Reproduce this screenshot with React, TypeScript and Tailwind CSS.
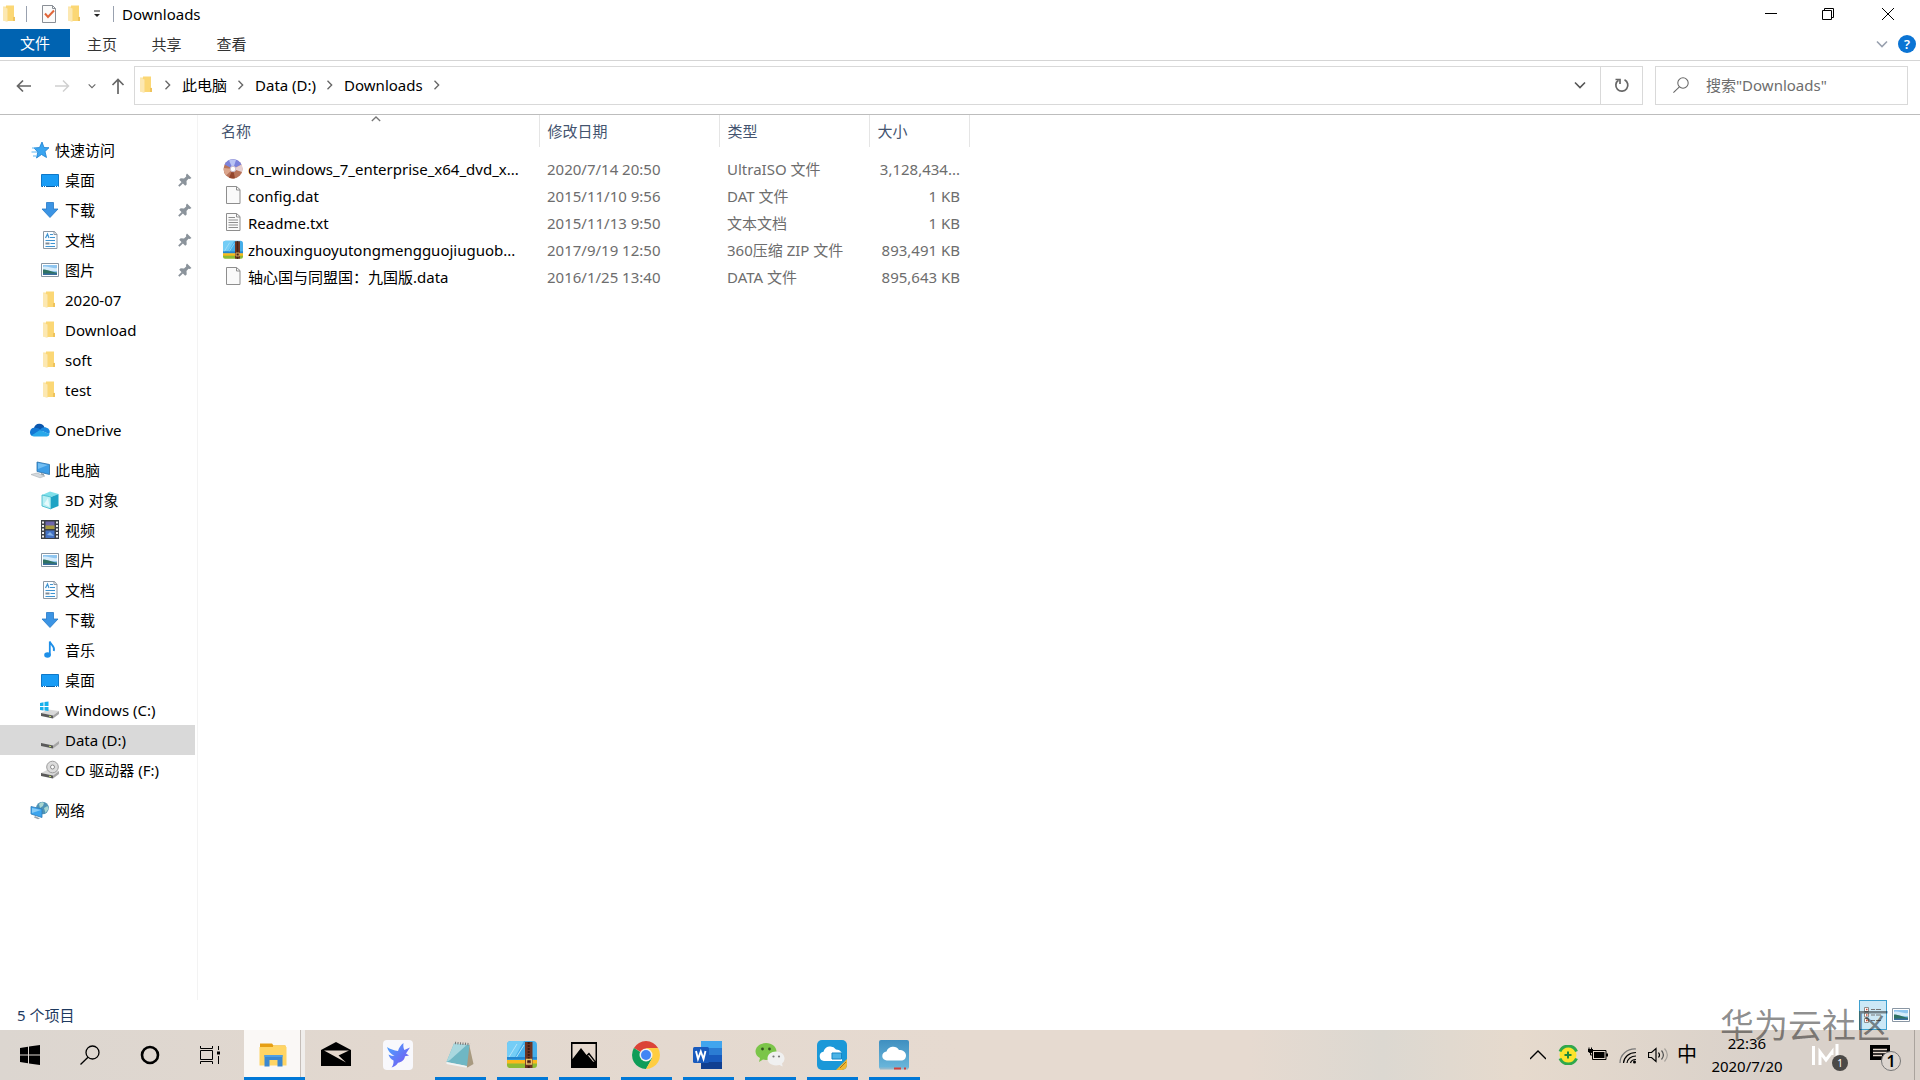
import type { ReactNode } from 'react';

type IconProps = { className?: string };

function FolderIcon({ className = 'h-5 w-5' }: IconProps) {
  return (
    <svg className={className} viewBox="1 0 20 20" aria-hidden="true">
      <path d="M4 2.500h4v14H4z" fill="#fbe3a0" />
      <path d="M7 1.500h8v11l1 1V17H7z" fill="#fbd775" />
      <path d="M4 3l4.500 1.500V18L4 16.500z" fill="#fce8b2" />
      <path d="M14 13h2v4h-2z" fill="#efc35c" />
    </svg>
  );
}

function CheckDocIcon() {
  return (
    <svg className="h-5 w-5" viewBox="0 0 20 20" aria-hidden="true">
      <path d="M3.500 1.500h10l3 3v14h-13z" fill="#fbfbfb" stroke="#8a8f96" />
      <path d="M13.500 1.500v3h3" fill="none" stroke="#8a8f96" />
      <path d="M6 9.500l3 3.500 6-6.500" fill="none" stroke="#e0663a" strokeWidth="2" />
    </svg>
  );
}

function StarIcon() {
  return (
    <svg className="h-5 w-5" viewBox="0 0 20 20" aria-hidden="true">
      <path d="M12 2l2 5.500 5 .2-4 3.800 1.500 6-5-3-5 3.500 1.300-6L4 8l5.500-.5z" fill="#3aa5f0" stroke="#1b7fd0" strokeWidth=".8" />
      <path d="M2 8h4M1.500 12H7M3 16h3" stroke="#5cb6f2" strokeWidth="1" />
    </svg>
  );
}

function DesktopIcon() {
  return (
    <svg className="h-5 w-5" viewBox="0 0 20 20" aria-hidden="true">
      <path d="M1.500 4.500h17v12h-17z" fill="#199cf5" stroke="#0f78c8" />
      <path d="M2 16.500h16" stroke="#0b5fa5" />
      <path d="M3 16.500h1m1 0h1m9 0h1m1 0h1" stroke="#fff" />
    </svg>
  );
}

function DownloadIcon() {
  return (
    <svg className="h-5 w-5" viewBox="0 0 20 20" aria-hidden="true">
      <path d="M6.500 2.500h7V9h4.500l-8 8.500L2 9h4.500z" fill="#3b94e4" stroke="#2478c6" strokeWidth=".8" />
    </svg>
  );
}

function DocumentIcon() {
  return (
    <svg className="h-5 w-5" viewBox="0 0 20 20" aria-hidden="true">
      <path d="M3.500 1.500h11l2.500 3v14H3.500z" fill="#fbfdff" stroke="#8c98a4" />
      <path d="M14 1.500v3h3" fill="none" stroke="#8c98a4" />
      <path d="M5.500 8L7.500 4l1.500 4M10 4.500h3M10 7.500h5M5.500 10.500h9.500M10.500 13.500H15M5.500 16.500H15" fill="none" stroke="#3f94d1" strokeWidth="1.200" />
      <path d="M5.500 12.500h4v2h-4z" fill="#7d8a96" />
    </svg>
  );
}

function PictureIcon({ className = 'h-5 w-5' }: IconProps) {
  return (
    <svg className={className} viewBox="0 0 20 20" aria-hidden="true">
      <path d="M1.500 3.500h17v13h-17z" fill="#fff" stroke="#8996a3" />
      <path d="M3 5h14v10H3z" fill="#8fc6f0" />
      <path d="M3 7c4-1.500 8 2 14 1v3H3z" fill="#d6ecfb" />
      <path d="M3 9.500c5 0 8 2.500 14 3V15H3z" fill="#2f7263" />
      <path d="M3 13.500h14V15H3z" fill="#386da0" />
    </svg>
  );
}

function CloudIcon() {
  return (
    <svg className="h-5 w-5" viewBox="0 0 20 20" aria-hidden="true">
      <path d="M4 8a5.500 5.500 0 0 1 10.500-.5L10 13z" fill="#0a56ad" />
      <path d="M4 7.800A4.500 4.500 0 0 0 2 16l9-6C9 8 6 7.300 4 7.800z" fill="#1378d4" />
      <path d="M10 10c1-2 4-3.500 6.500-2.200A4 4 0 0 1 19 14z" fill="#1a8ae0" />
      <path d="M1.500 15.500L10 10l9.500 4a2.800 2.800 0 0 1-2.500 2.500H4a4 4 0 0 1-2.500-1z" fill="#28a8ea" />
    </svg>
  );
}

function ComputerIcon() {
  return (
    <svg className="h-5 w-5" viewBox="0 0 20 20" aria-hidden="true">
      <path d="M7 2l12.500 2.500v10L7 11.500z" fill="#3d9de6" stroke="#2a6ea6" strokeWidth=".8" />
      <path d="M8 3l10 2L8 9z" fill="#72bef3" />
      <path d="M11 13l3 1v2l-3-1z" fill="#8f9aa3" />
      <path d="M1 14.500l6-1.500 8 3-5 1.800z" fill="#d4d9dd" stroke="#a9b0b6" strokeWidth=".6" />
    </svg>
  );
}

function CubeIcon() {
  return (
    <svg className="h-5 w-5" viewBox="0 0 20 20" aria-hidden="true">
      <path d="M2 5l8-3.500L18.500 4 11 7z" fill="#7fe0ea" />
      <path d="M2 5l9 2v12l-9-3z" fill="#b7eef3" stroke="#35b5c8" strokeWidth=".8" />
      <path d="M11 7l7.500-3v12L11 19z" fill="#1fa3c4" />
      <path d="M4 14l4-6 1.500 9z" fill="#e6fafc" />
    </svg>
  );
}

function VideoIcon() {
  return (
    <svg className="h-5 w-5" viewBox="0 0 20 20" aria-hidden="true">
      <path d="M1 0h18v19H1z" fill="#3b3f45" />
      <path d="M5.500 1.500h9V9h-9z" fill="#6f66ad" />
      <path d="M5.500 5.500h9V9h-9z" fill="#a79b3e" />
      <path d="M5.500 10.500h9V18h-9z" fill="#4472c4" />
      <path d="M7 15l3-3 4 4z" fill="#86b3e6" />
      <path d="M3 1.500v17M17 1.500v17" stroke="#f2f2f2" strokeWidth="2" strokeDasharray="2 1.500" />
    </svg>
  );
}

function MusicIcon() {
  return (
    <svg className="h-5 w-5" viewBox="0 0 20 20" aria-hidden="true">
      <ellipse cx="7.500" cy="15" rx="3.300" ry="2.700" fill="#1e8fe8" />
      <path d="M9.800 15.500V1.500c.8 3.500 5.700 4.500 4 9.500" fill="none" stroke="#1e8fe8" strokeWidth="1.800" />
    </svg>
  );
}

function DriveBody() {
  return (
    <>
      <path d="M1 13l7-3.500L19 11l-6 4.500z" fill="#d9d9d9" />
      <path d="M1 13l12 2.500v3L1 16z" fill="#5a5a5a" />
      <path d="M13 15.500L19 11v3l-6 4.500z" fill="#a6a6a6" />
      <path d="M9 16.200l2 .4" stroke="#c8e66a" />
    </>
  );
}

function WindowsDriveIcon() {
  return (
    <svg className="h-5 w-5" viewBox="0 0 20 20" aria-hidden="true">
      <DriveBody />
      <path d="M0 3l3.500-.7V6H0zM4.500 2l4-.6V6h-4zM0 7h3.500v3.500L0 10zM4.500 7h4v4l-4-.5z" fill="#16b1ec" />
    </svg>
  );
}

function DriveIcon() {
  return (
    <svg className="h-5 w-5" viewBox="0 0 20 20" aria-hidden="true">
      <DriveBody />
    </svg>
  );
}

function CdDriveIcon() {
  return (
    <svg className="h-5 w-5" viewBox="0 0 20 20" aria-hidden="true">
      <DriveBody />
      <circle cx="12.500" cy="7" r="5.800" fill="#dcdcdc" stroke="#9c9c9c" />
      <circle cx="12.500" cy="7" r="2" fill="#fff" stroke="#8a8a8a" />
    </svg>
  );
}

function NetworkIcon() {
  return (
    <svg className="h-5 w-5" viewBox="0 0 20 20" aria-hidden="true">
      <circle cx="12.500" cy="8" r="6.300" fill="#4f93b5" />
      <path d="M9 4c2-2 4-2 5-1l-1 3-3 2zM14 8l3.500-2 1 3-3 4z" fill="#a8d6d0" />
      <path d="M1 6.500l11 2.500v8.500L1 14z" fill="#3ba4ee" stroke="#2d78b4" strokeWidth=".8" />
      <path d="M2 8l9 2-9 3z" fill="#86cbf7" />
      <path d="M5 16l5 2.500-2 .8-4-1.800z" fill="#9aa4ac" />
    </svg>
  );
}

function PinIcon() {
  return (
    <svg className="h-3.5 w-3.5" viewBox="0 0 14 14" aria-hidden="true">
      <path d="M9 .5L13.500 5l-1.700 1-1.300-.2-2 2.200.2 3.500-1.500 1.300L1.200 6.800l1.500-1.500 3.300.2 2.200-2L8 2z" fill="#8b939b" />
      <path d="M4.500 9.500L.8 13.200" stroke="#8b939b" strokeWidth="1.800" />
    </svg>
  );
}

function DiscIcon() {
  return (
    <svg className="h-5 w-5" viewBox="0 0 20 20" aria-hidden="true">
      <circle cx="10" cy="10" r="9.500" fill="#b9745a" />
      <path d="M10 10L1.500 5.500A9.500 9.500 0 0 1 18.500 5.500z" fill="#7c83dc" />
      <path d="M10 10L6 1.400A9.500 9.500 0 0 1 13 1z" fill="#b9c3f5" />
      <path d="M10 10l8.500-4.500A9.500 9.500 0 0 1 19 13z" fill="#e6cfd0" />
      <path d="M10 10l-9-1a9.500 9.500 0 0 0 2 7.500z" fill="#dba58c" />
      <path d="M10 10l-4 8.600a9.500 9.500 0 0 0 6 .6z" fill="#94452c" />
      <circle cx="10" cy="10" r="2.800" fill="#fff" stroke="#c7b8c9" />
    </svg>
  );
}

function BlankFileIcon() {
  return (
    <svg className="h-5 w-5" viewBox="0 0 20 20" aria-hidden="true">
      <path d="M3.500.5h10l3.500 3v14H3.500z" fill="#fafafa" stroke="#8e8e8e" />
      <path d="M13.500.5v3.500H17" fill="none" stroke="#8e8e8e" />
    </svg>
  );
}

function TextFileIcon() {
  return (
    <svg className="h-5 w-5" viewBox="0 0 20 20" aria-hidden="true">
      <path d="M3.500.5h10l3.500 3v14H3.500z" fill="#fafafa" stroke="#8e8e8e" />
      <path d="M13.500.5v3.500H17M5.500 4.500h6.500M5.500 7h9.500M5.500 9.500h9.500M5.500 12h9.500M5.500 14.500h9.500" fill="none" stroke="#8e8e8e" />
    </svg>
  );
}

function ZipIcon({ className = 'h-5 w-5' }: IconProps) {
  return (
    <svg className={className} viewBox="0 0 30 30" aria-hidden="true">
      <path d="M0 20h30v5a3 3 0 0 1-3 3H3a3 3 0 0 1-3-3z" fill="#8dbb35" />
      <path d="M0 19h30v4.500H0z" fill="#fbb91c" />
      <path d="M4 1h22a4 4 0 0 1 4 4v15H0V5a4 4 0 0 1 4-4z" fill="#45aeea" />
      <path d="M4 1h13L8 17H0V5a4 4 0 0 1 4-4z" fill="#74cdf6" />
      <path d="M0 17h30v2.500H0z" fill="#2386cf" />
      <path d="M10 4L2 17M17 5L9.500 17" stroke="#b3e4fb" />
      <path d="M18 2h7.500v26H18z" fill="#6b3423" />
      <path d="M21.700 2v26" stroke="#3c1b12" strokeWidth="2" strokeDasharray="2 1" />
      <path d="M19.500 19.500h5v4.500h-5z" fill="none" stroke="#e8c36a" strokeWidth="1.300" />
    </svg>
  );
}

function SearchGlyph({ className }: IconProps) {
  return (
    <svg className={className} viewBox="0 0 20 20" fill="none" stroke="currentColor" strokeWidth="1.300" aria-hidden="true">
      <circle cx="12.500" cy="7.500" r="6.500" />
      <path d="M8 12.200L.5 19.500" />
    </svg>
  );
}

function Chevron({ className, d = 'M3 1l5 5-5 5' }: IconProps & { d?: string }) {
  return (
    <svg className={className} viewBox="0 0 12 12" fill="none" stroke="currentColor" strokeWidth="1.600" aria-hidden="true">
      <path d={d} />
    </svg>
  );
}

const DOWN = 'M1 3.500l5 5 5-5';
const UP = 'M1 8.500l5-5 5 5';

type TreeItem = {
  label: string;
  icon: ReactNode;
  root?: boolean;
  pinned?: boolean;
  selected?: boolean;
};

const tree: TreeItem[][] = [
  [
    { label: '快速访问', icon: <StarIcon />, root: true },
    { label: '桌面', icon: <DesktopIcon />, pinned: true },
    { label: '下载', icon: <DownloadIcon />, pinned: true },
    { label: '文档', icon: <DocumentIcon />, pinned: true },
    { label: '图片', icon: <PictureIcon />, pinned: true },
    { label: '2020-07', icon: <FolderIcon /> },
    { label: 'Download', icon: <FolderIcon /> },
    { label: 'soft', icon: <FolderIcon /> },
    { label: 'test', icon: <FolderIcon /> },
  ],
  [{ label: 'OneDrive', icon: <CloudIcon />, root: true }],
  [
    { label: '此电脑', icon: <ComputerIcon />, root: true },
    { label: '3D 对象', icon: <CubeIcon /> },
    { label: '视频', icon: <VideoIcon /> },
    { label: '图片', icon: <PictureIcon /> },
    { label: '文档', icon: <DocumentIcon /> },
    { label: '下载', icon: <DownloadIcon /> },
    { label: '音乐', icon: <MusicIcon /> },
    { label: '桌面', icon: <DesktopIcon /> },
    { label: 'Windows (C:)', icon: <WindowsDriveIcon /> },
    { label: 'Data (D:)', icon: <DriveIcon />, selected: true },
    { label: 'CD 驱动器 (F:)', icon: <CdDriveIcon /> },
  ],
  [{ label: '网络', icon: <NetworkIcon />, root: true }],
];

const files = [
  { name: 'cn_windows_7_enterprise_x64_dvd_x...', date: '2020/7/14 20:50', type: 'UltraISO 文件', size: '3,128,434...', icon: <DiscIcon /> },
  { name: 'config.dat', date: '2015/11/10 9:56', type: 'DAT 文件', size: '1 KB', icon: <BlankFileIcon /> },
  { name: 'Readme.txt', date: '2015/11/13 9:50', type: '文本文档', size: '1 KB', icon: <TextFileIcon /> },
  { name: 'zhouxinguoyutongmengguojiuguob...', date: '2017/9/19 12:50', type: '360压缩 ZIP 文件', size: '893,491 KB', icon: <ZipIcon /> },
  { name: '轴心国与同盟国：九国版.data', date: '2016/1/25 13:40', type: 'DATA 文件', size: '895,643 KB', icon: <BlankFileIcon /> },
];

function TitleBar() {
  return (
    <header className="flex h-[29px] items-center pb-0.5">
      <div className="flex items-center">
        <FolderIcon className="h-5 w-5" />
        <span className="ml-1.5 h-4 w-px bg-gray-400" />
        <button aria-label="属性" className="ml-3">
          <CheckDocIcon />
        </button>
        <button aria-label="新建文件夹" className="ml-1.5">
          <FolderIcon className="h-5 w-5" />
        </button>
        <button aria-label="自定义快速访问工具栏" className="ml-2">
          <svg className="h-2 w-2" viewBox="0 0 8 8" aria-hidden="true">
            <path d="M1 1h6" stroke="#222" />
            <path d="M1 4h6L4 7z" fill="#222" />
          </svg>
        </button>
        <span className="ml-3 h-4 w-px bg-gray-400" />
      </div>
      <h1 className="ml-2">Downloads</h1>
      <div className="ml-auto flex">
        <button aria-label="最小化" className="flex w-[58px] justify-center">
          <svg className="h-3 w-3" viewBox="0 0 12 12" stroke="#000" aria-hidden="true">
            <path d="M0 5.500h12" />
          </svg>
        </button>
        <button aria-label="还原" className="flex w-14 justify-center">
          <svg className="h-3 w-3" viewBox="0 0 12 12" fill="none" stroke="#000" aria-hidden="true">
            <path d="M.5 2.500h9v9h-9zM2.500 2.500v-2h9v9h-2" />
          </svg>
        </button>
        <button aria-label="关闭" className="flex w-16 justify-center">
          <svg className="h-3 w-3" viewBox="0 0 12 12" stroke="#000" aria-hidden="true">
            <path d="M0 0l12 12M12 0L0 12" />
          </svg>
        </button>
      </div>
    </header>
  );
}

function RibbonTabs() {
  return (
    <div className="flex h-8 items-start border-b border-[#d5d5d5]">
      <button className="h-7 w-[70px] bg-[#0063b1] text-white">文件</button>
      <button className="h-[30px] w-16 text-[#333]">主页</button>
      <button className="h-[30px] w-[65px] text-[#333]">共享</button>
      <button className="h-[30px] w-[65px] text-[#333]">查看</button>
      <div className="ml-auto flex h-[30px] items-center gap-2.5 pr-1">
        <button aria-label="展开功能区">
          <Chevron className="h-3 w-3 text-gray-400" d={DOWN} />
        </button>
        <button aria-label="帮助" className="h-[18px] w-[18px] rounded-full bg-[#0b74d4] text-[13px] leading-[18px] font-semibold text-white">
          ?
        </button>
      </div>
    </div>
  );
}

function AddressRow() {
  return (
    <div className="flex h-[54px] items-center border-b border-[#bdbdbd] pr-3 pb-1">
      <div className="flex w-[134px] shrink-0 items-center pl-4 text-[#666]">
        <button aria-label="后退">
          <svg className="h-4 w-4" viewBox="0 0 16 16" fill="none" stroke="currentColor" strokeWidth="1.700" aria-hidden="true">
            <path d="M15 8H1.500M7 2.500L1.500 8 7 13.500" />
          </svg>
        </button>
        <button aria-label="前进" className="ml-[22px] text-[#d0d0d0]">
          <svg className="h-4 w-4" viewBox="0 0 16 16" fill="none" stroke="currentColor" strokeWidth="1.500" aria-hidden="true">
            <path d="M1 8h13.500M9 2.500L14.500 8 9 13.500" />
          </svg>
        </button>
        <button aria-label="最近浏览的位置" className="ml-[18px]">
          <Chevron className="h-2 w-2" d={DOWN} />
        </button>
        <button aria-label="上移" className="ml-3.5">
          <svg className="h-4 w-4" viewBox="0 0 16 16" fill="none" stroke="currentColor" strokeWidth="1.700" aria-hidden="true">
            <path d="M8 16V1.500M2.500 7L8 1.500 13.500 7" />
          </svg>
        </button>
      </div>
      <div className="flex h-[39px] flex-1 items-center border border-[#d9d9d9] pb-0.5">
        <FolderIcon className="ml-0.5 h-5 w-5" />
        <Chevron className="ml-1.5 h-2.5 w-2.5 text-[#666]" />
        <button className="ml-[9px]">此电脑</button>
        <Chevron className="ml-[9px] h-2.5 w-2.5 text-[#666]" />
        <button className="ml-[9px]">Data (D:)</button>
        <Chevron className="ml-[9px] h-2.5 w-2.5 text-[#666]" />
        <button className="ml-[9px]">Downloads</button>
        <Chevron className="ml-[9px] h-2.5 w-2.5 text-[#666]" />
        <button aria-label="以前的位置" className="ml-auto flex w-10 items-center justify-center self-stretch text-[#555]">
          <Chevron className="h-3 w-3" d={DOWN} />
        </button>
        <span className="-mb-0.5 w-px self-stretch bg-[#d9d9d9]" />
        <button aria-label="刷新" className="flex w-[41px] items-center justify-center self-stretch text-[#666]">
          <svg className="h-4 w-4" viewBox="0 0 16 16" fill="none" stroke="currentColor" strokeWidth="1.700" aria-hidden="true">
            <path d="M10.500 2.800a6 6 0 1 1-6 .4" />
            <path d="M1.500 2.500H6V7" />
          </svg>
        </button>
      </div>
      <label className="ml-3 flex h-[39px] w-[253px] items-center border border-[#d9d9d9] pb-0.5 pl-[17px] text-[#666]">
        <SearchGlyph className="h-4 w-4 shrink-0" />
        <input
          type="search"
          aria-label="搜索"
          placeholder={'搜索"Downloads"'}
          className="ml-[17px] min-w-0 flex-1 bg-transparent outline-none placeholder:text-[#6d6d6d]"
        />
      </label>
    </div>
  );
}

function Sidebar() {
  return (
    <nav aria-label="导航窗格" className="flex w-[198px] shrink-0 flex-col gap-2.5 border-r border-[#f3f3f3] pt-5">
      {tree.map((group, i) => (
        <ul key={i}>
          {group.map((item) => (
            <li key={item.label}>
              <button
                className={`flex h-[30px] w-[195px] items-center gap-[5px] pr-[3px] ${item.root ? 'pl-[30px]' : 'pl-10'} ${item.selected ? 'bg-[#d9d9d9]' : ''}`}
              >
                {item.icon}
                <span>{item.label}</span>
                {item.pinned && (
                  <span className="ml-auto">
                    <PinIcon />
                  </span>
                )}
              </button>
            </li>
          ))}
        </ul>
      ))}
    </nav>
  );
}

function FileTable() {
  return (
    <main className="min-w-0 flex-1">
      <table className="w-[771px] table-fixed border-collapse text-left">
        <colgroup>
          <col className="w-[341px]" />
          <col className="w-[180px]" />
          <col className="w-[150px]" />
          <col className="w-[100px]" />
        </colgroup>
        <thead className="text-[#44546f]">
          <tr className="h-8">
            <th className="relative border-r border-[#e5e5e5] pl-[23px] font-normal">
              名称
              <Chevron className="absolute -top-px left-[173px] h-2.5 w-2.5 text-[#777]" d={UP} />
            </th>
            <th className="border-r border-[#e5e5e5] pl-2 font-normal">修改日期</th>
            <th className="border-r border-[#e5e5e5] pl-2 font-normal">类型</th>
            <th className="border-r border-[#e5e5e5] pl-2 font-normal">大小</th>
          </tr>
        </thead>
        <tbody className="text-[#6d6d6d] before:block before:h-2 before:content-['']">
          {files.map((file) => (
            <tr key={file.name} className="h-[27px]">
              <td className="pl-[25px] whitespace-nowrap text-black">
                <span className="flex items-center gap-[5px]">
                  {file.icon}
                  {file.name}
                </span>
              </td>
              <td className="pl-2 whitespace-nowrap">{file.date}</td>
              <td className="pl-2 whitespace-nowrap">{file.type}</td>
              <td className="pr-[9px] text-right whitespace-nowrap">{file.size}</td>
            </tr>
          ))}
        </tbody>
      </table>
    </main>
  );
}

function StatusBar() {
  return (
    <footer className="flex h-[30px] items-center pr-[9px] pl-[17px] text-[#1e3a5f]">
      <span>5 个项目</span>
      <div className="ml-auto flex items-center gap-1">
        <button aria-label="详细信息" className="flex h-[30px] w-7 items-center justify-center border border-[#3fa0cf] bg-[#cce8f6]">
          <svg className="h-4 w-5" viewBox="0 0 20 16" aria-hidden="true">
            <path d="M1.500.5h4v4h-4zM1.500 6h4v4h-4zM1.500 11.500h4v4h-4z" fill="#fff" stroke="#8c8c8c" />
            <path d="M3 2.500h1.500M3 8h1.500M3 13.500h1.500" stroke="#d0452c" strokeWidth="1.500" />
            <path d="M8 2.500h4m1 0h5M8 8h4m1 0h5M8 13.500h4m1 0h5" stroke="#777" />
          </svg>
        </button>
        <button aria-label="大缩略图">
          <PictureIcon className="h-5 w-5" />
        </button>
      </div>
    </footer>
  );
}

const apps: { label: string; running?: boolean; icon: ReactNode }[] = [
  {
    label: '邮件',
    icon: (
      <svg className="h-[30px] w-[30px]" viewBox="0 0 30 30" aria-hidden="true">
        <path d="M0 10L15 2l15 8v16H0z" fill="#000" />
        <path d="M3 10.500h25L17.500 15.500l7.500 7L3 10.500z" fill="#e5d8cd" />
      </svg>
    ),
  },
  {
    label: '迅雷',
    icon: (
      <svg className="h-[30px] w-[30px]" viewBox="0 0 30 30" aria-hidden="true">
        <defs>
          <linearGradient id="bird" x1="0" y1="0" x2="1" y2="1">
            <stop offset="0" stopColor="#4aa8ff" />
            <stop offset="1" stopColor="#7a4ff0" />
          </linearGradient>
        </defs>
        <rect width="30" height="30" rx="4" fill="#f8f8fc" />
        <path d="M4 7c3 2 7 3.500 11 4 1-3.500 3-6 5.500-8-.5 3 0 5 .8 7L27 7.500l-4 6 3 2-4 .7c-.7 4-3.500 6-7 6.500-1.500 2.500-3.500 4-6.500 4.800 2-2.500 2.200-5 2-7C7.500 19 6 16.500 5.500 14.500c2 1 4 1.500 6 1.500C7.500 14 5 11 4 7z" fill="url(#bird)" />
      </svg>
    ),
  },
  {
    label: '记事本',
    running: true,
    icon: (
      <svg className="h-[30px] w-[30px]" viewBox="0 0 30 30" aria-hidden="true">
        <path d="M24 4l4.500 20-6 3.500-3-1z" fill="#a89a80" />
        <path d="M9 3.500l15.500 1.500L22 26 1.500 22z" fill="#6fb7c4" />
        <path d="M9 3.500l13 1.200L5 20l-3.500 2z" fill="#a9d8df" />
        <path d="M1.500 22L22 26l-.3 1.800L1.500 24z" fill="#f0f4f4" />
        <path d="M10 3l15 1.300" stroke="#777" strokeWidth="2.500" strokeDasharray="1 1.500" />
      </svg>
    ),
  },
  { label: '360压缩', running: true, icon: <ZipIcon className="h-[30px] w-[30px]" /> },
  {
    label: '照片',
    running: true,
    icon: (
      <svg className="h-[26px] w-[26px]" viewBox="0 0 26 26" aria-hidden="true">
        <path d="M0 0h26v26H0z" fill="#000" />
        <path d="M1.500 2h23v17L18 10.500l-2.500 2.500-5.500-7-8.500 11z" fill="#e5d8cd" />
        <path d="M16.500 13l2 .5 5 6.500-1.500-.5z" fill="#e5d8cd" />
      </svg>
    ),
  },
  {
    label: 'Chrome',
    running: true,
    icon: (
      <svg className="h-7 w-7" viewBox="0 0 28 28" aria-hidden="true">
        <path d="M14 14L1.900 7a14 14 0 0 1 24.200 0z" fill="#db4437" />
        <path d="M14 14h-1L1.900 7A14 14 0 0 0 14 28l6-10.500z" fill="#0f9d58" />
        <path d="M14 7h12.100A14 14 0 0 1 14 28l6-10.500z" fill="#ffcd40" />
        <circle cx="14" cy="14" r="6.500" fill="#f1f1f1" />
        <circle cx="14" cy="14" r="5" fill="#4285f4" />
      </svg>
    ),
  },
  {
    label: 'Word',
    running: true,
    icon: (
      <svg className="h-[30px] w-[30px]" viewBox="0 0 30 30" aria-hidden="true">
        <path d="M8 1h21v7H8z" fill="#41a5ee" />
        <path d="M8 8h21v7H8z" fill="#2b7cd3" />
        <path d="M8 15h21v7H8z" fill="#185abd" />
        <path d="M8 22h21v7H8z" fill="#103f91" />
        <rect y="7" width="16" height="16" rx="1.500" fill="#185abd" />
        <path d="M3 11l2 8 2.800-7.500L10.500 19l2-8" fill="none" stroke="#fff" strokeWidth="1.900" />
      </svg>
    ),
  },
  {
    label: '微信',
    running: true,
    icon: (
      <svg className="h-[30px] w-[30px]" viewBox="0 0 30 30" aria-hidden="true">
        <path d="M11 3c6 0 10.500 3.800 10.500 8.500S17 20 11 20c-1 0-2-.2-3-.5L4 22l1-4C2 16.500.5 14 .5 11.500.5 6.800 5 3 11 3z" fill="#7bc549" />
        <path d="M21 11.500c5 0 8.500 3 8.500 7 0 2-1 4-2.500 5l.7 3-3.200-1.600c-1 .3-2.300.5-3.500.5-5 0-8.500-3-8.500-6.900s3.500-7 8.500-7z" fill="#f0f0f0" />
        <circle cx="7.500" cy="9" r="1.400" fill="#33551f" />
        <circle cx="14.500" cy="9" r="1.400" fill="#33551f" />
        <circle cx="18.500" cy="16.500" r="1.100" fill="#777" />
        <circle cx="24" cy="16.500" r="1.100" fill="#777" />
      </svg>
    ),
  },
  {
    label: '云桌面',
    running: true,
    icon: (
      <svg className="h-[30px] w-[30px]" viewBox="0 0 30 30" aria-hidden="true">
        <rect width="30" height="30" rx="5" fill="#1a98d8" />
        <path d="M7 21a4.700 4.700 0 0 1-.5-9.300A7 7 0 0 1 19 9.500c4 0 6 3 6 5.500v6z" fill="#fff" />
        <path d="M15 13h9.500v6H15z" fill="#4cb4e6" stroke="#1685c4" strokeWidth="1" />
        <path d="M30 19v6a5 5 0 0 1-5 5h-6z" fill="#f0b732" />
        <path d="M23 28l6-6" stroke="#9b7420" />
      </svg>
    ),
  },
  {
    label: '云客户端',
    running: true,
    icon: (
      <svg className="h-[30px] w-[30px]" viewBox="0 0 30 30" aria-hidden="true">
        <defs>
          <linearGradient id="sky" x1="0" y1="0" x2="0" y2="1">
            <stop offset="0" stopColor="#3f8fc0" />
            <stop offset="1" stopColor="#6bb8dc" />
          </linearGradient>
        </defs>
        <rect width="30" height="29" rx="2" fill="url(#sky)" />
        <path d="M8 20.500a4.500 4.500 0 0 1-.5-9A7 7 0 0 1 20 10c4 0 7 2 7 5.500 0 3-2 5-5 5z" fill="#fff" />
        <path d="M1 28.500h28" stroke="#8fb9cf" strokeWidth="2" />
        <path d="M15 28.500h7m3 0h2" stroke="#d2403a" strokeWidth="2" />
      </svg>
    ),
  },
];

function Taskbar() {
  return (
    <div className="flex h-[50px] bg-[linear-gradient(90deg,#dcd6d0_0%,#e2d8cf_20%,#e6dad0_50%,#e6dad0_65%,#dcd8d1_72%,#e6dacd_79%,#d9d1ca_92%)] text-black">
      <button aria-label="开始" className="flex w-[60px] items-center justify-center">
        <svg className="h-5 w-5" viewBox="0 0 20 20" aria-hidden="true">
          <path d="M0 3l8-1.200v7.700H0zM9 1.600L20 0v9.500H9zM0 10.500h8v7.700L0 17zM9 10.500h11V20L9 18.400z" />
        </svg>
      </button>
      <button aria-label="搜索" className="flex w-[60px] items-center justify-center">
        <SearchGlyph className="h-5 w-5" />
      </button>
      <button aria-label="Cortana" className="flex w-[60px] items-center justify-center">
        <svg className="h-5 w-5" viewBox="0 0 20 20" aria-hidden="true">
          <circle cx="10" cy="10" r="8" fill="none" stroke="#000" strokeWidth="2.600" />
        </svg>
      </button>
      <button aria-label="任务视图" className="flex w-[60px] items-center justify-center">
        <svg className="h-5 w-5" viewBox="0 0 20 20" fill="none" stroke="#000" aria-hidden="true">
          <path d="M.5 5.500h12v9H.5zM.5 1v2.500h12V1M.5 19v-2.500h12V19M18.500 1v4M18.500 11v8" />
          <path d="M17 6.500h3v3h-3z" fill="#000" stroke="none" />
        </svg>
      </button>
      <button aria-label="文件资源管理器" className="ml-1 flex w-[61px] border-b-[3px] border-[#0078d7] bg-[#f0eeec]">
        <span className="flex h-full w-[57px] items-center justify-center border-r border-[#c4bdb8] bg-[#faf8f6] pt-0.5 pl-0.5">
          <svg className="h-7 w-7" viewBox="0 0 28 28" aria-hidden="true">
            <path d="M1 2.500h12l1.500 2H26V8H1z" fill="#e69f14" />
            <path d="M.5 6h27v18.500H.5z" fill="#ffd564" />
            <path d="M14 4.500h13v5H14z" fill="#ffd564" />
            <path d="M5.500 14h18v11.500h-5V19h-8v6.500h-5z" fill="#3b88d0" />
            <path d="M5.500 14h18v2h-18z" fill="#4fa0e4" />
          </svg>
        </span>
      </button>
      {apps.map((app) => (
        <button key={app.label} aria-label={app.label} className="flex w-[62px] flex-col items-center">
          <span className="flex h-[47px] items-center pt-0.5">{app.icon}</span>
          {app.running && <span className="h-[3px] w-[51px] bg-[#0078d7]" />}
        </button>
      ))}
      <div className="ml-auto flex items-center">
        <button aria-label="显示隐藏的图标" className="flex w-[30px] justify-center">
          <svg className="h-4 w-4" viewBox="0 0 16 16" fill="none" stroke="#000" strokeWidth="1.300" aria-hidden="true">
            <path d="M0 12l8-8 8 8" />
          </svg>
        </button>
        <button aria-label="360" className="flex w-[30px] justify-center">
          <svg className="h-5 w-5" viewBox="0 0 20 20" aria-hidden="true">
            <circle cx="10" cy="10" r="8.500" fill="#fbe32c" />
            <path d="M2 6.500A9 9 0 0 1 18.500 6.500" fill="none" stroke="#2fa84c" strokeWidth="3" />
            <path d="M18.500 13.500A9 9 0 0 1 2 13.500" fill="none" stroke="#2fa84c" strokeWidth="3" />
            <path d="M10 6.500v7M6.500 10h7" stroke="#1d8a3c" strokeWidth="2" />
          </svg>
        </button>
        <button aria-label="电池" className="flex w-[30px] justify-center">
          <svg className="h-5 w-5" viewBox="0 0 20 20" aria-hidden="true">
            <path d="M4.500 5.500h13.500v9H4.500z" fill="none" stroke="#000" />
            <path d="M6 7h10.500v6H6zM18 8.500h2v3h-2z" />
            <path d="M1 2.500v2M3.500 2.500v2" stroke="#000" />
            <path d="M0 4h5v2.500L3.500 8h-2L0 6.500z" />
            <path d="M2.500 7v3H5" fill="none" stroke="#000" />
          </svg>
        </button>
        <button aria-label="网络" className="flex w-[30px] justify-center">
          <svg className="h-[18px] w-[18px]" viewBox="0 0 18 18" fill="none" stroke="#000" strokeWidth="1.200" aria-hidden="true">
            <path d="M1 17C1 9 8 2.500 17 3" stroke="#777" />
            <path d="M4.500 17C5 11 10 6.500 17 6.500" />
            <path d="M8 17c.5-4 4-7 9-7" />
            <path d="M11.500 17c.5-2 2.500-3.500 5.500-3.500" />
            <circle cx="15.500" cy="16" r="1.500" fill="#000" stroke="none" />
          </svg>
        </button>
        <button aria-label="音量" className="flex w-[29px] justify-center">
          <svg className="h-5 w-5" viewBox="0 0 20 20" fill="none" stroke="#000" strokeWidth="1.200" aria-hidden="true">
            <path d="M.5 7.500h3L8 3.500v13l-4.500-4h-3z" />
            <path d="M10.500 7.500c1.200 1.500 1.200 3.500 0 5" />
            <path d="M13.500 5.500c2.300 2.700 2.300 6.300 0 9" stroke="#555" />
            <path d="M16.500 3.500c3.500 4 3.500 9 0 13" stroke="#a5a09b" />
          </svg>
        </button>
        <button aria-label="输入法" className="w-[30px] text-xl leading-6">
          中
        </button>
        <button className="flex w-[90px] flex-col items-center leading-[23px]">
          <span>22:36</span>
          <span>2020/7/20</span>
        </button>
        <button aria-label="输入工具" className="relative ml-5 h-8 w-9 text-white">
          <svg className="h-6 w-7" viewBox="0 0 28 24" fill="none" stroke="#fff" strokeWidth="3" aria-hidden="true">
            <path d="M1.500 3v19M8 22V9l6 8 6-8v3M25 1v12" />
          </svg>
          <span className="absolute right-0 bottom-0 h-4 w-4 rounded-full bg-[#4b4947] text-[10px] leading-4">1</span>
        </button>
        <button aria-label="通知" className="relative ml-[22px] h-8 w-[31px]">
          <svg className="h-5 w-5" viewBox="0 0 20 20" aria-hidden="true">
            <path d="M0 0h20v15h-5v4l-4-4H0z" />
            <path d="M3 4.500h14M3 7.500h14M3 10.500h9" stroke="#e5d8cd" strokeWidth="1.500" />
          </svg>
          <span className="absolute right-0 bottom-0 h-5 w-5 rounded-full border border-[#777] bg-[#dcd5cf] text-base leading-[18px] font-semibold">1</span>
        </button>
        <span className="ml-[13px] h-[50px] w-1.5 border-l border-[#aaa39d]" />
      </div>
    </div>
  );
}

export default function App() {
  return (
    <div className="relative flex min-h-screen flex-col bg-white font-['Noto_Sans','Noto_Sans_CJK_SC',sans-serif] text-[15px] leading-5 text-black">
      <TitleBar />
      <RibbonTabs />
      <AddressRow />
      <div className="flex flex-1">
        <Sidebar />
        <FileTable />
      </div>
      <StatusBar />
      <Taskbar />
      <div className="pointer-events-none absolute right-[30px] bottom-[35px] text-[34px] leading-10 text-black/45">华为云社区</div>
    </div>
  );
}
